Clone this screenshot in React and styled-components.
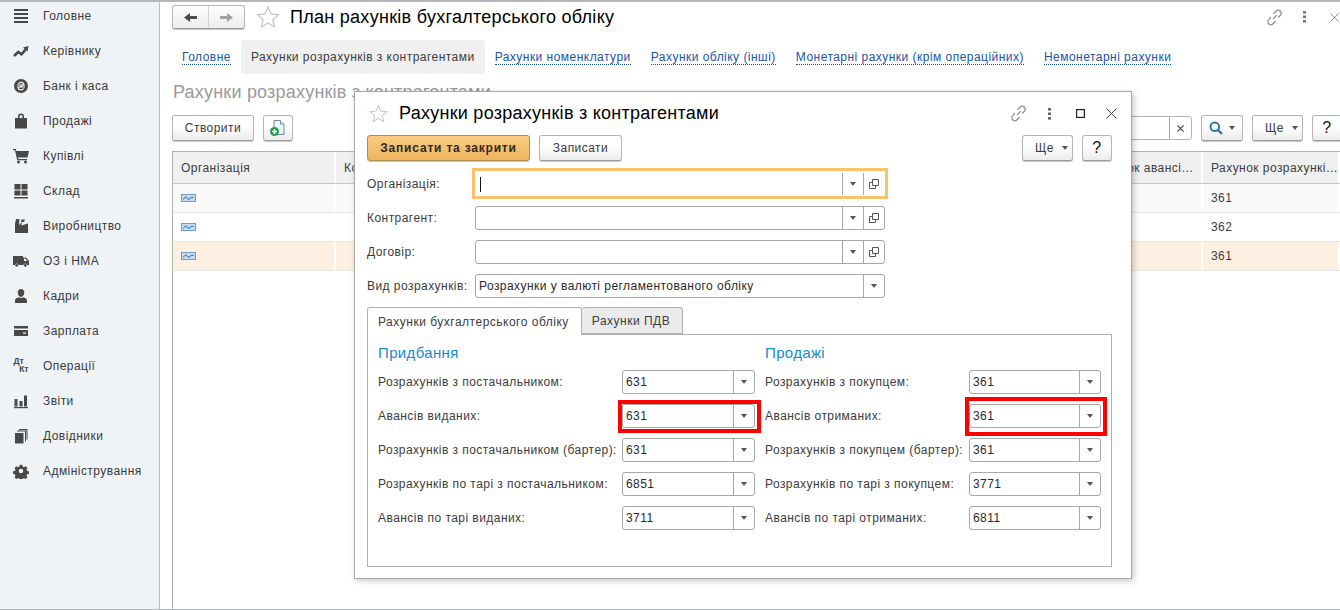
import React from "react";
import styled, { createGlobalStyle, css } from "styled-components";

const GlobalStyle = createGlobalStyle`
  html, body {
    margin: 0;
    padding: 0;
    height: 100%;
    overflow: hidden;
    background: #fff;
  }
  body {
    font-family: "Liberation Sans", Arial, sans-serif;
    font-size: 12px;
    letter-spacing: 0.45px;
    color: #3c3c3c;
  }
  #root {
    height: 100%;
  }
`;

const Page = styled.div`
  position: relative;
  display: flex;
  height: 610px;
  box-sizing: border-box;
  border-top: 2px solid #b4b8bb;
  border-bottom: 1px solid #b4b8bb;
  overflow: hidden;
`;

const Sidebar = styled.nav`
  flex: 0 0 159px;
  background: #eff3f6;
  border-right: 1px solid #b9bfc4;
  overflow: hidden;
`;

const SideList = styled.div`
  margin-top: -4px;
`;

const SideItem = styled.div`
  display: flex;
  align-items: center;
  height: 35px;
  color: #3a3a3a;
`;

const SideIcon = styled.span`
  flex: 0 0 16px;
  display: flex;
  justify-content: center;
  margin: 0 14px 0 13px;
  color: #484848;
`;

const DtKt = styled.span`
  display: block;
  width: 15px;
  font-size: 8.5px;
  line-height: 7.5px;
  font-weight: 700;
  letter-spacing: 0;
  span {
    display: block;
  }
  span + span {
    text-align: right;
  }
`;

const Main = styled.main`
  flex: 1;
  min-width: 0;
  display: flex;
  flex-direction: column;
  padding-left: 12px;
`;

const TopBar = styled.div`
  display: flex;
  align-items: center;
  height: 30px;
  margin-bottom: 8px;
`;

const NavGroup = styled.div`
  display: flex;
  width: 73px;
  height: 24px;
  box-sizing: border-box;
  border: 1px solid #b5b5b5;
  border-bottom-color: #9c9c9c;
  border-radius: 3px;
  background: linear-gradient(#fff, #ececec);
  box-shadow: 0 1px 0 #c4c4c4;
`;

const NavPart = styled.span`
  flex: 1;
  display: flex;
  align-items: center;
  justify-content: center;
  color: ${(p) => (p.$muted ? "#a0a0a0" : "#4c4c4c")};
  & + & {
    border-left: 1px solid #d2d2d2;
  }
`;

const PageTitle = styled.h1`
  margin: 0 0 0 10px;
  font-size: 18px;
  font-weight: 400;
  letter-spacing: 0.28px;
  color: #000;
`;

const StarSlot = styled.span`
  display: flex;
  margin-left: ${(p) => p.$left || 0}px;
`;

const TopTools = styled.div`
  display: flex;
  align-items: center;
  margin-left: auto;
  margin-right: -9px;
  color: #777;
`;

const ToolSlot = styled.span`
  flex: 0 0 ${(p) => p.$w}px;
  display: flex;
  justify-content: center;
`;

const TabBar = styled.div`
  display: flex;
  align-items: center;
  height: 34px;
`;

const SectionTab = styled.a`
  display: flex;
  align-items: center;
  height: 34px;
  padding: 1px 10px 0;
  box-sizing: border-box;
  border-radius: 3px;
  letter-spacing: 0.47px;
  background: ${(p) => (p.$active ? "#f0f0f0" : "transparent")};
  color: ${(p) => (p.$active ? "#3c3c3c" : "#1b55a5")};
  span {
    border-bottom: ${(p) => (p.$active ? "0" : "1px dotted #1b55a5")};
    line-height: 13px;
  }
`;

const SectionTitle = styled.h2`
  margin: 8px 0 12px 1px;
  height: 21px;
  line-height: 21px;
  font-size: 18px;
  font-weight: 400;
  letter-spacing: 0.2px;
  color: #9a9a9a;
  white-space: nowrap;
`;

const Toolbar = styled.div`
  display: flex;
  align-items: center;
  gap: 9px;
  height: 26px;
  margin-bottom: 10px;
  margin-right: -2px;
`;

const Button = styled.button`
  display: flex;
  align-items: center;
  justify-content: center;
  gap: 6px;
  width: ${(p) => p.$w}px;
  height: 26px;
  padding: 0;
  box-sizing: border-box;
  border: 1px solid #b5b5b5;
  border-bottom-color: #9c9c9c;
  border-radius: 3px;
  background: linear-gradient(#fff 40%, #ececec);
  box-shadow: 0 1px 0 #c8c8c8;
  font: inherit;
  letter-spacing: inherit;
  color: #3c3c3c;
`;

const MoreButton = styled(Button)`
  justify-content: flex-start;
  gap: 8px;
  padding-left: 12px;
`;

const SaveButton = styled(Button)`
  border-color: #b08a4e;
  background: linear-gradient(#f8cd83, #eeb45f);
  font-weight: 700;
  letter-spacing: 0.8px;
  color: #33291a;
`;

const HelpButton = styled(Button)`
  font-size: 16px;
  color: #111;
`;

const Caret = styled.i`
  display: block;
  width: 0;
  height: 0;
  border: 3.5px solid transparent;
  border-top: 4px solid #555;
  border-bottom: 0;
`;

const Search = styled.div`
  display: flex;
  width: 192px;
  height: 24px;
  margin-left: auto;
  box-sizing: border-box;
  border: 1px solid #b5b5b5;
  border-radius: 3px;
`;

const SearchClear = styled.span`
  display: flex;
  align-items: center;
  justify-content: center;
  width: 21px;
  margin-left: auto;
  border-left: 1px solid #a8a8a8;
  color: #555;
`;

const Table = styled.div`
  flex: 1;
  border-top: 1px solid #b0b0b0;
  border-left: 1px solid #b0b0b0;
`;

const TableRow = styled.div`
  display: grid;
  grid-template-columns: 163px 1fr 119px 137px;
  height: ${(p) => (p.$head ? 32 : 29)}px;
  box-sizing: border-box;
  border-bottom: 1px solid ${(p) => (p.$head ? "#c8c8c8" : "#e6e6e6")};
  background: ${(p) => (p.$head ? "#f0f0f0" : p.$bg || "#fff")};
`;

const Cell = styled.div`
  display: flex;
  align-items: center;
  min-width: 0;
  padding: 0 2px 0 8px;
  border-right: 2px solid #fff;
  color: #3c3c3c;
  white-space: nowrap;
  overflow: hidden;
`;

const Dialog = styled.section`
  position: absolute;
  left: 354px;
  top: 89px;
  width: 778px;
  height: 488px;
  box-sizing: border-box;
  display: flex;
  flex-direction: column;
  padding: 0 19px 0 12px;
  background: #fff;
  border: 1px solid #a8a8a8;
  box-shadow: 2px 2px 6px rgba(0, 0, 0, 0.22);
`;

const DialogHead = styled.header`
  display: flex;
  align-items: center;
  height: 43px;
`;

const DialogTitle = styled.h3`
  margin: 0 0 0 11px;
  font-size: 18px;
  font-weight: 400;
  letter-spacing: 0.26px;
  color: #000;
`;

const DialogTools = styled.div`
  display: flex;
  align-items: center;
  margin-left: auto;
  margin-right: -15px;
  color: #666;
`;

const Commands = styled.div`
  display: flex;
  align-items: center;
  gap: 9px;
  margin-bottom: 11px;
`;

const CommandsEnd = styled.div`
  display: flex;
  gap: 9px;
  margin-left: auto;
`;

const FormRow = styled.div`
  display: flex;
  align-items: center;
  height: 24px;
  margin-bottom: 10px;
`;

const FormLabel = styled.label`
  flex: 0 0 108px;
  white-space: nowrap;
  color: #3c3c3c;
`;

const Field = styled.div`
  position: relative;
  display: flex;
  width: ${(p) => p.$w}px;
  height: 24px;
  box-sizing: border-box;
  border: 1px solid #a8a8a8;
  border-radius: 3px;
  background: #fff;
  color: #2a2a2a;
  ${(p) =>
    p.$focus &&
    css`
      border-color: transparent;
      &::after {
        content: "";
        position: absolute;
        inset: -5px -4px -4px -4px;
        border: 3px solid #fbc26c;
        pointer-events: none;
      }
    `}
  ${(p) =>
    p.$frame &&
    css`
      &::after {
        content: "";
        position: absolute;
        left: -5px;
        right: -7px;
        top: ${p.$frame === "tall" ? -8 : -5}px;
        bottom: ${p.$frame === "tall" ? -9 : -6}px;
        border: 4px solid #f00;
        pointer-events: none;
      }
    `}
`;

const FieldText = styled.span`
  flex: 1;
  display: flex;
  align-items: center;
  min-width: 0;
  padding-left: 3px;
  white-space: nowrap;
`;

const TextCursor = styled.i`
  display: block;
  width: 1px;
  height: 15px;
  margin-left: 1px;
  background: #111;
`;

const FieldPart = styled.span`
  flex: 0 0 20px;
  display: flex;
  align-items: center;
  justify-content: center;
  border-left: 1px solid #a8a8a8;
  color: #555;
`;

const TabHeads = styled.div`
  display: flex;
  height: 28px;
  margin-top: -1px;
`;

const TabHead = styled.div`
  display: flex;
  align-items: center;
  padding: 0 12px 0 10px;
  box-sizing: border-box;
  height: ${(p) => (p.$active ? 28 : 27)}px;
  border: 1px solid #b0b0b0;
  border-left-width: ${(p) => (p.$active ? 1 : 0)}px;
  border-bottom: ${(p) => (p.$active ? "0" : "1px solid #b0b0b0")};
  border-radius: 3px 3px 0 0;
  background: ${(p) => (p.$active ? "#fff" : "#ebebeb")};
  position: relative;
  z-index: 1;
  letter-spacing: 0.5px;
  color: #3c3c3c;
`;

const TabPanel = styled.div`
  display: grid;
  grid-template-columns: 377px 336px;
  column-gap: 10px;
  height: 233px;
  margin-top: -1px;
  padding-left: 10px;
  box-sizing: border-box;
  border: 1px solid #b0b0b0;
`;

const AccountGroup = styled.div`
  display: flex;
  flex-direction: column;
`;

const GroupTitle = styled.h4`
  margin: 8px 0 8px;
  height: 19px;
  line-height: 19px;
  font-size: 15px;
  font-weight: 400;
  letter-spacing: 0.35px;
  color: #1a8ad0;
`;

const AccountRow = styled.div`
  display: flex;
  align-items: center;
  justify-content: space-between;
  height: 24px;
  margin-bottom: 10px;
  white-space: nowrap;
`;

/* drawings */

const Svg = ({ size = 16, view = 16, children, ...rest }) => (
  <svg width={size} height={size} viewBox={`0 0 ${view} ${view}`} fill="currentColor" {...rest}>
    {children}
  </svg>
);

const Star = ({ size }) => (
  <Svg size={size} view={24} fill="none" stroke="#c3c8cc" strokeWidth="1.3">
    <path d="M12 2l3 7 7.5.7-5.7 5 1.8 7.3L12 18l-6.6 4 1.8-7.3-5.7-5L9 9z" />
  </Svg>
);

const LinkIcon = () => (
  <Svg size={17} view={16} fill="none" stroke="#8a8a8a" strokeWidth="1.1">
    <path d="M6.5 9.5l3.6-3.6M7 4.5l2.4-2.4a2.8 2.8 0 0 1 4 4L11.5 8M9 11.5l-2.4 2.4a2.8 2.8 0 0 1-4-4L4.5 7.5" />
  </Svg>
);

const Dots = () => (
  <svg width="3" height="12" viewBox="0 0 3 12" fill="currentColor">
    <rect y="0" width="3" height="2.6" />
    <rect y="4.5" width="3" height="2.6" />
    <rect y="9" width="3" height="2.6" />
  </svg>
);

const CloseIcon = ({ size = 11, color = "#444", weight = 1 }) => (
  <Svg size={size} view={11} fill="none" stroke={color} strokeWidth={weight}>
    <path d="M.5.5l10 10M10.5.5l-10 10" />
  </Svg>
);

const MaxIcon = () => (
  <Svg size={9} view={9} fill="none" stroke="#222" strokeWidth="1.2">
    <rect x=".6" y=".6" width="7.8" height="7.8" />
  </Svg>
);

const OpenIcon = () => (
  <Svg size={10} view={10} fill="none" stroke="#555" strokeWidth="1">
    <path d="M3.5.5h6v6h-6zM3.5 3.5H.5v6h6V6.5" />
  </Svg>
);

const ArrowLeft = () => (
  <Svg size={15} view={15}>
    <path d="M7 3v3h7v3H7v3L1 7.5z" />
  </Svg>
);

const ArrowRight = () => (
  <Svg size={15} view={15}>
    <path d="M8 3v3H1v3h7v3l6-4.500z" />
  </Svg>
);

const NewDocIcon = () => (
  <Svg size={18} view={18}>
    <path d="M5 1.500h6.500l3.500 3.500v10.500H5z" fill="#eef3f7" stroke="#708a9c" strokeWidth="1" />
    <path d="M11.500 1.500V5H15" fill="#fff" stroke="#708a9c" strokeWidth="1" />
    <circle cx="5.500" cy="12.500" r="4.500" fill="#27a24a" />
    <path d="M3 12.500h5M5.500 10v5" stroke="#fff" strokeWidth="1.500" />
  </Svg>
);

const SearchIcon = () => (
  <Svg size={14} view={14} fill="none" stroke="#2a76ad" strokeWidth="2">
    <circle cx="5.800" cy="5.800" r="4.300" />
    <path d="M9 9l4 4" strokeWidth="2.400" />
  </Svg>
);

const RowIcon = () => (
  <svg width="15" height="8" viewBox="0 0 15 8">
    <rect x=".5" y=".5" width="14" height="7" fill="#c6dcf2" stroke="#6f9dc8" />
    <path d="M2.500 5.500c1.500-3 2.500-3 3.500-1.500s2 1.500 3 .5 2-1.500 3.500-1" fill="none" stroke="#1f5a9c" />
  </svg>
);

const menuIcons = {
  home: (
    <Svg>
      <rect x="1" y="1" width="14" height="2" />
      <rect x="1" y="5" width="14" height="2" />
      <rect x="1" y="9" width="14" height="2" />
      <rect x="1" y="13" width="14" height="2" />
    </Svg>
  ),
  chart: (
    <Svg>
      <path d="M1 13l4.300-4 3.200 2.300 4.300-5" fill="none" stroke="currentColor" strokeWidth="2.600" />
      <path d="M10 4.500L15.500 3l-1 5.500z" />
    </Svg>
  ),
  bank: (
    <Svg>
      <circle cx="8" cy="8" r="7" />
      <path
        d="M5.500 5.800C6 3.800 10.600 3.800 10.600 6.300 10.600 8.300 5.400 8.300 5.400 10.300 5.400 12.400 10.100 12.400 10.600 10.300M4 7h8M4 9h8"
        fill="none"
        stroke="#eff3f6"
        strokeWidth="1.200"
      />
    </Svg>
  ),
  bag: (
    <Svg>
      <path
        fillRule="evenodd"
        d="M5 5V3.500a3 3 0 0 1 6 0V5h3v10.500H2V5zm1.500 0h3V3.500a1.500 1.500 0 0 0-3 0z"
      />
    </Svg>
  ),
  cart: (
    <Svg>
      <path d="M0 1h2.800l.6 2H16l-1.500 6.500H5l.3 1.500H14v1.200H4.200L2 2.200H0z" />
      <circle cx="5.500" cy="14" r="1.500" />
      <circle cx="12.500" cy="14" r="1.500" />
    </Svg>
  ),
  stock: (
    <Svg>
      <rect x="1.500" y="1" width="6" height="5.500" />
      <rect x="8.500" y="1" width="6" height="5.500" />
      <rect x="1.500" y="7.500" width="6" height="5" />
      <rect x="8.500" y="7.500" width="6" height="5" />
      <rect x="1" y="14" width="14" height="1.500" />
    </Svg>
  ),
  factory: (
    <Svg>
      <path d="M2 15V6l1-5h3.500L6 7l3-3-.5 3.500L15 5.500V15zM8.500 1.500H12L11 4H8z" />
    </Svg>
  ),
  truck: (
    <Svg>
      <path
        fillRule="evenodd"
        d="M0 3h10v1.500h3l3 3.500v4h-1.800a2 2 0 0 0-3.900 0H5.700a2 2 0 0 0-3.900 0H0zm11 2.500V8h3.300l-2-2.500z"
      />
      <circle cx="3.700" cy="12.300" r="1.400" />
      <circle cx="12.300" cy="12.300" r="1.400" />
    </Svg>
  ),
  staff: (
    <Svg>
      <path d="M8 1c2 0 3.300 1.500 3.300 3.500S10 9 8 9 4.700 6.500 4.700 4.500 6 1 8 1z" />
      <path d="M2 15v-2.500C2 10.500 4 9.800 6 9.300c1 .8 3 .8 4 0 2 .5 4 1.200 4 3.200V15z" />
    </Svg>
  ),
  card: (
    <Svg>
      <path
        fillRule="evenodd"
        d="M1 3h14v2.500H1zM1 7h14v6H1zm9 2.500v1.200h3V9.500z"
      />
    </Svg>
  ),
  reports: (
    <Svg>
      <rect x="1.500" y="6" width="3" height="7.500" />
      <rect x="6.500" y="8" width="3" height="5.500" />
      <rect x="11" y="2.500" width="3" height="11" />
      <rect x="1" y="14" width="14" height="1.200" />
    </Svg>
  ),
  books: (
    <Svg>
      <rect x="2" y="5" width="8.500" height="10.500" />
      <path d="M4 3.500h8v10h1V2.500H4zM6 1h8.500v10.500h-1V2H6z" />
    </Svg>
  ),
  gear: (
    <Svg>
      <path
        fillRule="evenodd"
        d="M6.500 1h3l.4 2 1.500.7 1.800-1.100 2 2-1.100 1.800.7 1.500 2 .4v3l-2 .4-.7 1.500 1.100 1.800-2 2-1.800-1.100-1.500.7-.4 2h-3l-.4-2-1.500-.7-1.800 1.100-2-2 1.100-1.800-.7-1.500-2-.4v-3l2-.4.7-1.500-1.100-1.800 2-2 1.800 1.100 1.500-.7zM8 5.500a2.500 2.500 0 1 0 0 5 2.500 2.500 0 0 0 0-5z"
        transform="translate(.8 .8) scale(.9)"
      />
    </Svg>
  ),
};

const menu = [
  { name: "Головне", icon: menuIcons.home },
  { name: "Керівнику", icon: menuIcons.chart },
  { name: "Банк і каса", icon: menuIcons.bank },
  { name: "Продажі", icon: menuIcons.bag },
  { name: "Купівлі", icon: menuIcons.cart },
  { name: "Склад", icon: menuIcons.stock },
  { name: "Виробництво", icon: menuIcons.factory },
  { name: "ОЗ і НМА", icon: menuIcons.truck },
  { name: "Кадри", icon: menuIcons.staff },
  { name: "Зарплата", icon: menuIcons.card },
  {
    name: "Операції",
    icon: (
      <DtKt>
        <span>Дт</span>
        <span>Кт</span>
      </DtKt>
    ),
  },
  { name: "Звіти", icon: menuIcons.reports },
  { name: "Довідники", icon: menuIcons.books },
  { name: "Адміністрування", icon: menuIcons.gear },
];

const sections = [
  { name: "Головне" },
  { name: "Рахунки розрахунків з контрагентами", active: true },
  { name: "Рахунки номенклатури" },
  { name: "Рахунки обліку (інші)" },
  { name: "Монетарні рахунки (крім операційних)" },
  { name: "Немонетарні рахунки" },
];

const rows = [
  { account: "361", bg: "#f9f9f9" },
  { account: "362", bg: "#fff" },
  { account: "361", bg: "#fdf0e0" },
];

const purchases = [
  { label: "Розрахунків з постачальником:", value: "631" },
  { label: "Авансів виданих:", value: "631", frame: "short" },
  { label: "Розрахунків з постачальником (бартер):", value: "631" },
  { label: "Розрахунків по тарі з постачальником:", value: "6851" },
  { label: "Авансів по тарі виданих:", value: "3711" },
];

const sales = [
  { label: "Розрахунків з покупцем:", value: "361" },
  { label: "Авансів отриманих:", value: "361", frame: "tall" },
  { label: "Розрахунків з покупцем (бартер):", value: "361" },
  { label: "Розрахунків по тарі з покупцем:", value: "3771" },
  { label: "Авансів по тарі отриманих:", value: "6811" },
];

const Accounts = ({ title, items, fieldWidth }) => (
  <AccountGroup>
    <GroupTitle>{title}</GroupTitle>
    {items.map((item) => (
      <AccountRow key={item.label}>
        <span>{item.label}</span>
        <Field $w={fieldWidth} $frame={item.frame}>
          <FieldText>{item.value}</FieldText>
          <FieldPart>
            <Caret />
          </FieldPart>
        </Field>
      </AccountRow>
    ))}
  </AccountGroup>
);

const PickerField = ({ focus }) => (
  <Field $w={410} $focus={focus}>
    <FieldText>{focus && <TextCursor />}</FieldText>
    <FieldPart>
      <Caret />
    </FieldPart>
    <FieldPart>
      <OpenIcon />
    </FieldPart>
  </Field>
);

const App = () => {
  return (
    <Page>
      <GlobalStyle />
      <Sidebar>
        <SideList>
          {menu.map((item) => (
            <SideItem key={item.name}>
              <SideIcon>{item.icon}</SideIcon>
              {item.name}
            </SideItem>
          ))}
        </SideList>
      </Sidebar>

      <Main>
        <TopBar>
          <NavGroup>
            <NavPart>
              <ArrowLeft />
            </NavPart>
            <NavPart $muted>
              <ArrowRight />
            </NavPart>
          </NavGroup>
          <StarSlot $left={11}>
            <Star size={24} />
          </StarSlot>
          <PageTitle>План рахунків бухгалтерського обліку</PageTitle>
          <TopTools>
            <ToolSlot $w={30}>
              <LinkIcon />
            </ToolSlot>
            <ToolSlot $w={30}>
              <Dots />
            </ToolSlot>
            <ToolSlot $w={30}>
              <CloseIcon size={9} color="#777" />
            </ToolSlot>
          </TopTools>
        </TopBar>

        <TabBar>
          {sections.map((s) => (
            <SectionTab key={s.name} $active={s.active}>
              <span>{s.name}</span>
            </SectionTab>
          ))}
        </TabBar>

        <SectionTitle>Рахунки розрахунків з контрагентами</SectionTitle>

        <Toolbar>
          <Button $w={82}>Створити</Button>
          <Button $w={30}>
            <NewDocIcon />
          </Button>
          <Search>
            <SearchClear>
              <CloseIcon size={7} color="#444" weight={1.7} />
            </SearchClear>
          </Search>
          <Button $w={42}>
            <SearchIcon />
            <Caret />
          </Button>
          <MoreButton $w={51}>
            Ще
            <Caret />
          </MoreButton>
          <HelpButton $w={30}>?</HelpButton>
        </Toolbar>

        <Table>
          <TableRow $head>
            <Cell>Організація</Cell>
            <Cell>Контрагент</Cell>
            <Cell>Рахунок авансі…</Cell>
            <Cell>Рахунок розрахункі…</Cell>
          </TableRow>
          {rows.map((row, i) => (
            <TableRow key={i} $bg={row.bg}>
              <Cell>
                <RowIcon />
              </Cell>
              <Cell />
              <Cell />
              <Cell>{row.account}</Cell>
            </TableRow>
          ))}
        </Table>
      </Main>

      <Dialog>
        <DialogHead>
          <StarSlot $left={2}>
            <Star size={19} />
          </StarSlot>
          <DialogTitle>Рахунки розрахунків з контрагентами</DialogTitle>
          <DialogTools>
            <ToolSlot $w={31}>
              <LinkIcon />
            </ToolSlot>
            <ToolSlot $w={31}>
              <Dots />
            </ToolSlot>
            <ToolSlot $w={31}>
              <MaxIcon />
            </ToolSlot>
            <ToolSlot $w={31}>
              <CloseIcon />
            </ToolSlot>
          </DialogTools>
        </DialogHead>

        <Commands>
          <SaveButton $w={163}>Записати та закрити</SaveButton>
          <Button $w={83}>Записати</Button>
          <CommandsEnd>
            <MoreButton $w={51}>
              Ще
              <Caret />
            </MoreButton>
            <HelpButton $w={30}>?</HelpButton>
          </CommandsEnd>
        </Commands>

        <FormRow>
          <FormLabel>Організація:</FormLabel>
          <PickerField focus />
        </FormRow>
        <FormRow>
          <FormLabel>Контрагент:</FormLabel>
          <PickerField />
        </FormRow>
        <FormRow>
          <FormLabel>Договір:</FormLabel>
          <PickerField />
        </FormRow>
        <FormRow>
          <FormLabel>Вид розрахунків:</FormLabel>
          <Field $w={410}>
            <FieldText>Розрахунки у валюті регламентованого обліку</FieldText>
            <FieldPart>
              <Caret />
            </FieldPart>
          </Field>
        </FormRow>

        <TabHeads>
          <TabHead $active>Рахунки бухгалтерського обліку</TabHead>
          <TabHead>Рахунки ПДВ</TabHead>
        </TabHeads>
        <TabPanel>
          <Accounts title="Придбання" items={purchases} fieldWidth={133} />
          <Accounts title="Продажі" items={sales} fieldWidth={132} />
        </TabPanel>
      </Dialog>
    </Page>
  );
};

export default App;
